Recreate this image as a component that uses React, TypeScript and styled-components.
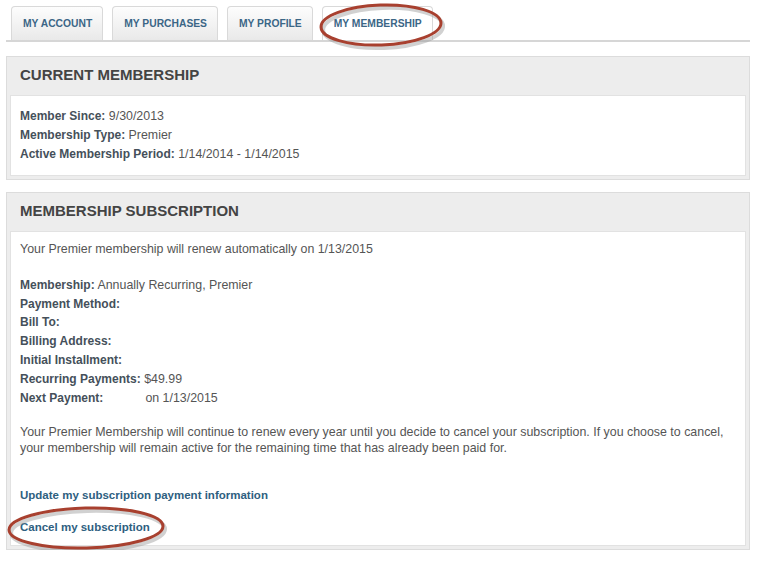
import React from "react";
import styled, { createGlobalStyle } from "styled-components";

const Global = createGlobalStyle`
  html, body { margin: 0; padding: 0; background: #fff; }
  body { font-family: "Liberation Sans", Arial, sans-serif; }
`;

const Page = styled.div`
  width: 744px;
  padding: 6px 0 0 6px;
  font-family: "Liberation Sans", Arial, sans-serif;
`;

const TabBar = styled.div`
  display: flex;
  gap: 9px;
  padding-left: 5px;
  border-bottom: 2px solid #d6d6d6;
  height: 34px;
`;

const Tab = styled.div<{ $active?: boolean }>`
  position: relative;
  height: 34px;
  box-sizing: border-box;
  padding: 0 10px 0 11px;
  display: flex;
  align-items: center;
  border: 1px solid #d9d9d9;
  border-bottom: none;
  border-radius: 4px 4px 0 0;
  background: ${(p) =>
    p.$active ? "#ffffff" : "linear-gradient(#fdfdfd, #e9e9e9)"};
  color: #3b6686;
  font-size: 10.3px;
  font-weight: bold;
`;

const Panel = styled.section<{ $gap?: number }>`
  margin-top: ${(p) => p.$gap ?? 14}px;
  border: 1px solid #dcdcdc;
  background: #ededed;
  padding: 0 3px 3px 3px;
`;

const PanelHeader = styled.h2`
  margin: 0;
  height: 38px;
  box-sizing: border-box;
  padding: 0 0 3px 10px;
  display: flex;
  align-items: center;
  font-size: 15px;
  font-weight: bold;
  color: #444;
  text-transform: uppercase;
`;

const PanelBody = styled.div<{ $top: number; $bottom: number }>`
  background: #fff;
  border: 1px solid #e2e2e2;
  padding: ${(p) => p.$top}px 10px ${(p) => p.$bottom}px 9px;
  font-size: 12.4px;
  color: #555;
`;

const Lines = styled.div<{ $mt?: number }>`
  line-height: 18.9px;
  margin-top: ${(p) => p.$mt ?? 0}px;
`;

const Line = styled.div``;

const Label = styled.b`
  color: #45505a;
  font-size: 12px;
`;

const Spacer = styled.span<{ $w: number }>`
  display: inline-block;
  width: ${(p) => p.$w}px;
`;

const Paragraph = styled.p<{ $mt: number }>`
  margin: ${(p) => p.$mt}px 0 0 0;
  line-height: 16px;
`;

const LinkRow = styled.div<{ $mt: number }>`
  position: relative;
  margin-top: ${(p) => p.$mt}px;
  line-height: 16px;
`;

const Link = styled.a`
  font-size: 11.5px;
  font-weight: bold;
  color: #2e607f;
  text-decoration: none;
  cursor: pointer;
`;

const Ring = styled.svg<{ $left: number; $top: number }>`
  position: absolute;
  left: ${(p) => p.$left}px;
  top: ${(p) => p.$top}px;
  overflow: visible;
  pointer-events: none;
`;

function Ellipse({ w, h, left, top, tilt }: { w: number; h: number; left: number; top: number; tilt: number }) {
  const cx = w / 2;
  const cy = h / 2;
  return (
    <Ring $left={left} $top={top} width={w} height={h} viewBox={`0 0 ${w} ${h}`}>
      <ellipse
        cx={cx + 2}
        cy={cy + 3}
        rx={cx - 2}
        ry={cy - 2}
        transform={`rotate(${tilt} ${cx} ${cy})`}
        fill="none"
        stroke="#9a9a9a"
        strokeOpacity={0.45}
        strokeWidth={4}
      />
      <ellipse
        cx={cx}
        cy={cy}
        rx={cx - 2}
        ry={cy - 2}
        transform={`rotate(${tilt} ${cx} ${cy})`}
        fill="none"
        stroke="#a8402f"
        strokeWidth={3}
      />
    </Ring>
  );
}

export default function App() {
  return (
    <>
      <Global />
      <Page>
        <TabBar>
          <Tab>MY ACCOUNT</Tab>
          <Tab>MY PURCHASES</Tab>
          <Tab>MY PROFILE</Tab>
          <Tab $active>
            MY MEMBERSHIP
            <Ellipse w={124} h={44} left={-4} top={-4} tilt={-2} />
          </Tab>
        </TabBar>

        <Panel $gap={14}>
          <PanelHeader>Current Membership</PanelHeader>
          <PanelBody $top={11} $bottom={11}>
            <Lines>
              <Line>
                <Label>Member Since:</Label> 9/30/2013
              </Line>
              <Line>
                <Label>Membership Type:</Label> Premier
              </Line>
              <Line>
                <Label>Active Membership Period:</Label> 1/14/2014 - 1/14/2015
              </Line>
            </Lines>
          </PanelBody>
        </Panel>

        <Panel $gap={12}>
          <PanelHeader>Membership Subscription</PanelHeader>
          <PanelBody $top={8} $bottom={10}>
            <Lines>
              <Line>Your Premier membership will renew automatically on 1/13/2015</Line>
            </Lines>
            <Lines $mt={17}>
              <Line>
                <Label>Membership:</Label> Annually Recurring, Premier
              </Line>
              <Line>
                <Label>Payment Method:</Label>
              </Line>
              <Line>
                <Label>Bill To:</Label>
              </Line>
              <Line>
                <Label>Billing Address:</Label>
              </Line>
              <Line>
                <Label>Initial Installment:</Label>
              </Line>
              <Line>
                <Label>Recurring Payments:</Label> $49.99
              </Line>
              <Line>
                <Label>Next Payment:</Label>
                <Spacer $w={42} />on 1/13/2015
              </Line>
            </Lines>
            <Paragraph $mt={16}>
              Your Premier Membership will continue to renew every year until you decide to cancel your
              subscription. If you choose to cancel, your membership will remain active for the remaining
              time that has already been paid for.
            </Paragraph>
            <LinkRow $mt={31}>
              <Link>Update my subscription payment information</Link>
            </LinkRow>
            <LinkRow $mt={16}>
              <Link>Cancel my subscription</Link>
              <Ellipse w={158} h={44} left={-13} top={-13} tilt={-1.5} />
            </LinkRow>
          </PanelBody>
        </Panel>
      </Page>
    </>
  );
}
